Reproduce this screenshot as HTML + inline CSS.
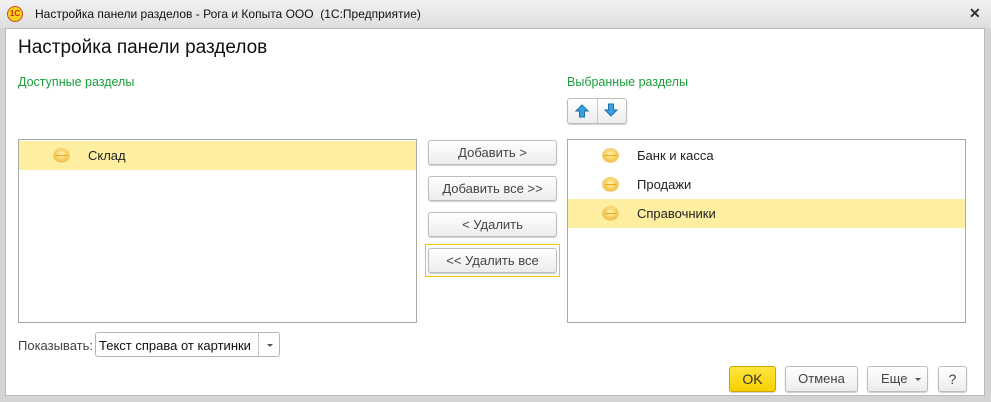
<!DOCTYPE html>
<html><head><meta charset="utf-8"><style>
*{margin:0;padding:0;box-sizing:border-box}
body{width:991px;height:402px;overflow:hidden;background:#d4d4d4;font-family:"Liberation Sans",Arial,sans-serif;font-size:12px;color:#333;position:relative}
.abs{position:absolute}
.title{left:0;top:0;width:991px;height:28px;background:linear-gradient(#f2f2f2,#dedede);}
.body{left:5px;top:28px;width:980px;height:368px;background:#fff;border:1px solid #bbb}
.btn{position:absolute;background:linear-gradient(#fff,#ececec);border:1px solid #bdbdbd;border-radius:3px;box-shadow:0 1px 1px rgba(0,0,0,.2);text-align:center;font-size:13px;color:#444}
.list{position:absolute;border:1px solid #a9a9a9;background:#fff}
.row{position:absolute;left:0;right:0;height:29px;line-height:29px;font-size:13px;color:#222}
.sel{background:#fdeea0}
.ic{position:absolute;top:8px;width:15px;height:13px;border-radius:50%;background:radial-gradient(circle at 50% 40%,#fff3b0 0,#f8d060 50%,#e3a820 100%);box-shadow:0 0 0 1px #f1cf7a}
.ic::after{content:"";position:absolute;left:2px;right:2px;top:6px;height:1px;background:#e8a820}
.green{color:#1a9e3a;font-size:12.5px}
</style></head><body>
<div class="abs title"></div>
<div class="abs" style="left:7px;top:6px;width:16px;height:16px;border-radius:50%;background:#f8d21c;border:1px solid #d04a1a;font-size:8px;font-weight:bold;color:#d02a1a;text-align:center;line-height:14px">1C</div>
<div class="abs" style="left:35px;top:7px;font-size:12px;color:#111">Настройка панели разделов - Рога и Копыта ООО &nbsp;(1С:Предприятие)</div>
<div class="abs" style="left:969px;top:5px;font-size:14px;font-weight:bold;color:#333">✕</div>
<div class="abs body"></div>
<div class="abs" style="left:18px;top:37px;font-size:19px;color:#111">Настройка панели разделов</div>
<div class="abs green" style="left:18px;top:75px">Доступные разделы</div>
<div class="abs green" style="left:567px;top:75px">Выбранные разделы</div>

<div class="btn" style="left:567px;top:98px;width:60px;height:26px;padding:0"></div>
<div class="abs" style="left:597px;top:99px;width:1px;height:24px;background:#c8c8c8"></div>
<svg class="abs" style="left:574px;top:103px" width="16" height="16"><path d="M8 2 L14 8 H10.5 V14 H5.5 V8 H2 Z" fill="#3aa0e0" stroke="#1a6fa8" stroke-width="1"/></svg>
<svg class="abs" style="left:603px;top:102px" width="16" height="16"><path d="M8 14 L14 8 H10.5 V2 H5.5 V8 H2 Z" fill="#3aa0e0" stroke="#1a6fa8" stroke-width="1"/></svg>

<div class="list" style="left:18px;top:139px;width:399px;height:184px">
 <div class="row sel" style="top:1px"><div class="ic" style="left:35px"></div><span style="position:absolute;left:69px">Склад</span></div>
</div>
<div class="list" style="left:567px;top:139px;width:399px;height:184px">
 <div class="row" style="top:1px"><div class="ic" style="left:35px"></div><span style="position:absolute;left:69px">Банк и касса</span></div>
 <div class="row" style="top:30px"><div class="ic" style="left:35px"></div><span style="position:absolute;left:69px">Продажи</span></div>
 <div class="row sel" style="top:59px"><div class="ic" style="left:35px"></div><span style="position:absolute;left:69px">Справочники</span></div>
</div>

<div class="btn" style="left:428px;top:140px;width:129px;height:25px;line-height:23px">Добавить &gt;</div>
<div class="btn" style="left:428px;top:176px;width:129px;height:25px;line-height:23px">Добавить все &gt;&gt;</div>
<div class="btn" style="left:428px;top:212px;width:129px;height:25px;line-height:23px">&lt; Удалить</div>
<div class="abs" style="left:425px;top:244px;width:135px;height:33px;border:1px solid #f2c200"></div>
<div class="btn" style="left:428px;top:248px;width:129px;height:25px;line-height:23px">&lt;&lt; Удалить все</div>

<div class="abs" style="left:18px;top:338px;font-size:13px;color:#444">Показывать:</div>
<div class="abs" style="left:95px;top:332px;width:185px;height:25px;border:1px solid #b5b5b5;border-radius:3px;background:#fff"></div>
<div class="abs" style="left:99px;top:338px;font-size:13px;color:#111">Текст справа от картинки</div>
<div class="abs" style="left:258px;top:333px;width:1px;height:23px;background:#c8c8c8"></div>
<div class="abs" style="left:267px;top:344px;width:0;height:0;border-left:3px solid transparent;border-right:3px solid transparent;border-top:3px solid #555"></div>

<div class="btn" style="left:729px;top:366px;width:47px;height:26px;line-height:24px;background:linear-gradient(#ffe640,#f5d000);border-color:#c8a800;color:#333;font-size:14px">OK</div>
<div class="btn" style="left:785px;top:366px;width:73px;height:26px;line-height:24px;font-size:13px">Отмена</div>
<div class="btn" style="left:867px;top:366px;width:61px;height:26px;line-height:24px;font-size:13px;text-align:left;padding-left:13px">Еще<span style="position:absolute;left:47px;top:11px;border-left:3px solid transparent;border-right:3px solid transparent;border-top:3px solid #555;width:0;height:0"></span></div>
<div class="btn" style="left:938px;top:366px;width:29px;height:26px;line-height:24px;font-size:14px">?</div>
</body></html>
